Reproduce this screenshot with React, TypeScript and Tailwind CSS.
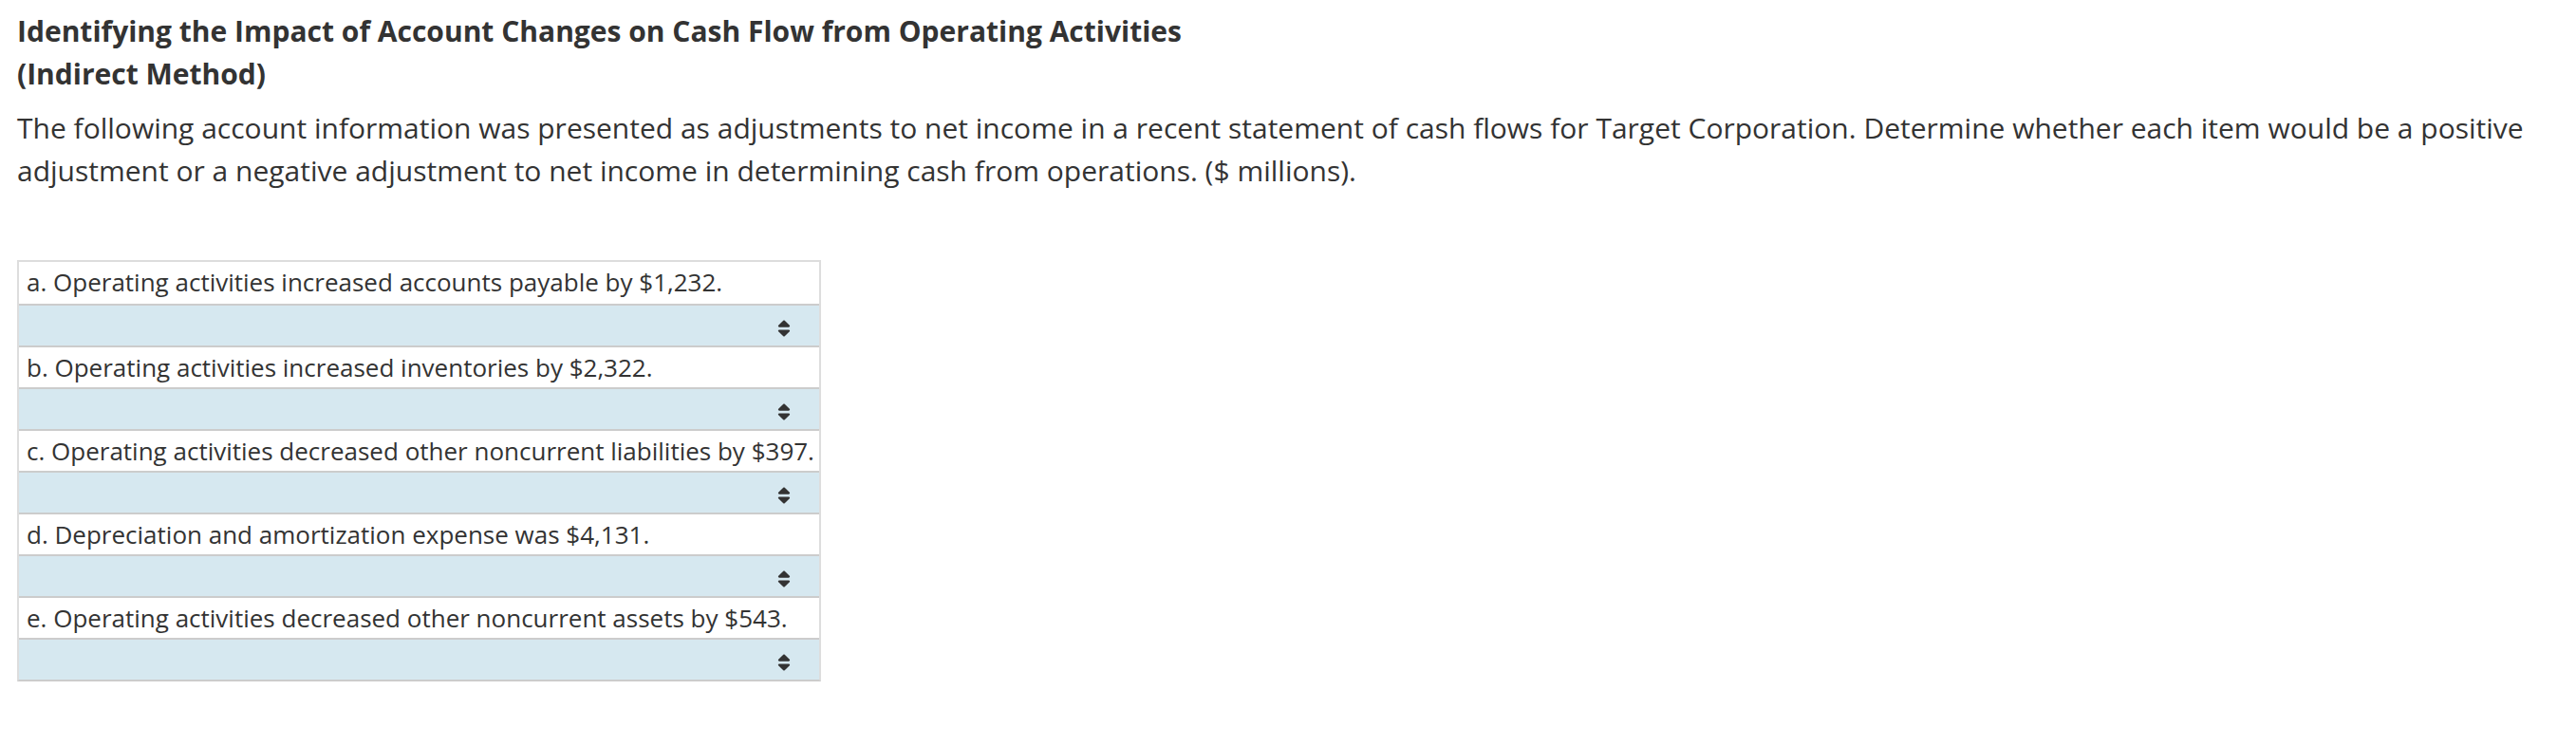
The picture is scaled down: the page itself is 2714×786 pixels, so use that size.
import { FaSort } from "react-icons/fa"

const ITEMS = [
  "a. Operating activities increased accounts payable by $1,232.",
  "b. Operating activities increased inventories by $2,322.",
  "c. Operating activities decreased other noncurrent liabilities by $397.",
  "d. Depreciation and amortization expense was $4,131.",
  "e. Operating activities decreased other noncurrent assets by $543.",
]

export default function App() {
  return (
    <div className="min-h-screen bg-white px-[18px] pt-[10px] text-[#333]" style={{ fontFamily: '"Open Sans", sans-serif' }}>
      <h1 className="text-[30px] font-bold leading-[45px]">
        Identifying the Impact of Account Changes on Cash Flow from Operating Activities
        <br />
        (Indirect Method)
      </h1>
      <p className="mt-3 text-[30px] leading-[45px]">
        The following account information was presented as adjustments to net income in a recent statement of cash flows for Target Corporation. Determine whether each item would be a positive adjustment or a negative adjustment to net income in determining cash from operations. ($ millions).
      </p>

      <div className="mt-[72px] w-[847px] border-2 border-[#ddd] border-b-[#ccc]">
        {ITEMS.map((text, i) => (
          <div key={i}>
            <div className={`h-[44px] overflow-hidden whitespace-nowrap bg-white pl-[8px] text-[26px] leading-[43px] ${i > 0 ? "border-t-2 border-[#ccc]" : ""}`}>
              {text}
            </div>
            <div className="flex h-[44px] items-center justify-end border-t-2 border-[#ccc] bg-[#d6e8f0] pr-[26px]">
              <FaSort className="mt-[6px] text-[#333]" size={22} />
            </div>
          </div>
        ))}
      </div>
    </div>
  )
}
